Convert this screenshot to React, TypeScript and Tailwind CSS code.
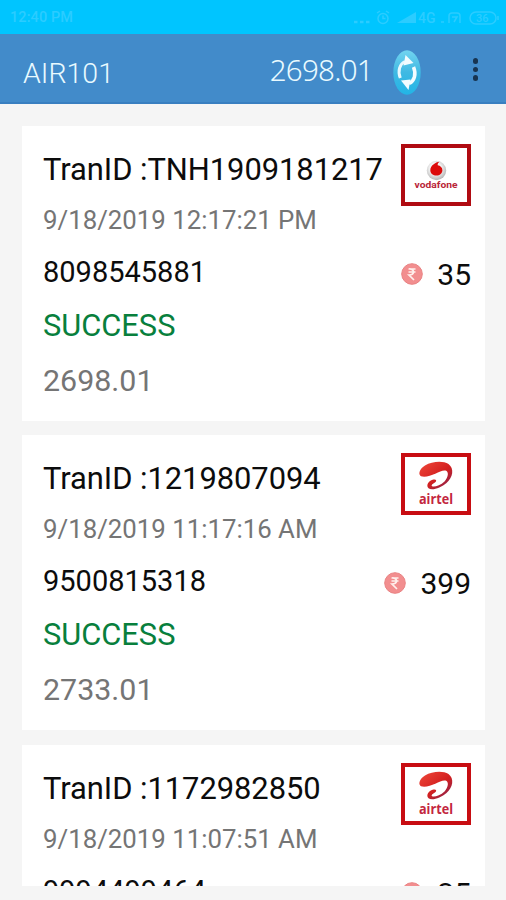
import { useId } from "react";

type Operator = "vodafone" | "airtel";

interface Transaction {
  id: string;
  date: string;
  phone: string;
  status: string;
  balance: string;
  amount: string;
  operator: Operator;
}

const transactions: Transaction[] = [
  { id: "TNH1909181217", date: "9/18/2019 12:17:21 PM", phone: "8098545881", status: "SUCCESS", balance: "2698.01", amount: "35", operator: "vodafone" },
  { id: "1219807094", date: "9/18/2019 11:17:16 AM", phone: "9500815318", status: "SUCCESS", balance: "2733.01", amount: "399", operator: "airtel" },
  { id: "1172982850", date: "9/18/2019 11:07:51 AM", phone: "9994499464", status: "SUCCESS", balance: "3132.01", amount: "35", operator: "airtel" },
];

function StatusBar() {
  return (
    <div className="flex h-[34px] shrink-0 items-center justify-between bg-[#00c5ff] pt-0.5 pr-1.5 pl-2.5 text-[#2bccff]">
      <span className="text-[14.5px] font-medium tracking-[0.1px]">12:40 PM</span>
      <svg width="146" height="18" viewBox="0 0 146 18" fill="none" stroke="currentColor" strokeWidth="1.5">
        <path d="M0 13h3.500M6 13h3.500M12 13h3.500" strokeWidth="2.500" />
        <circle cx="29" cy="9.500" r="5" />
        <path d="M29 6.500v3h2.500M23 4l3-2M35 4l-3-2" />
        <path d="M43 14 62 3v11z" fill="currentColor" stroke="none" />
        <text x="64" y="14" fontSize="14" fontWeight="500" fill="currentColor" stroke="none">4G</text>
        <path d="M87 13h3M95 14V7a3 3 0 0 1 3-3h5a3 3 0 0 1 3 3v7M98 8h5l-3 5" />
        <rect x="116" y="3" width="26" height="12" rx="6" />
        <text x="122" y="13" fontSize="11" fontWeight="500" fill="currentColor" stroke="none">36</text>
        <path d="M144 7v4" />
      </svg>
    </div>
  );
}

function RefreshIcon() {
  const id = useId();
  return (
    <svg width="28" height="45" viewBox="0 0 28 45">
      <defs>
        <linearGradient id={id} x1="0" y1="0" x2="0" y2="1">
          <stop offset="0" stopColor="#72d4f0" />
          <stop offset="0.5" stopColor="#3fb9e3" />
          <stop offset="1" stopColor="#22b5e6" />
        </linearGradient>
      </defs>
      <ellipse cx="14" cy="22.500" rx="13.700" ry="22.200" fill={`url(#${id})`} />
      <path d="M7.300 28C4.500 21 6.500 14 12 11.500" fill="none" stroke="#e8f9ff" strokeWidth="3" />
      <path d="M12.500 5 20.500 13 10.500 15.500z" fill="#f3fcff" />
      <path d="M20.500 17C23.500 24 21.500 31 16 33.500" fill="none" stroke="#f3fcff" strokeWidth="3.500" />
      <path d="M15.500 40 8 30.500 17.500 29.500z" fill="#f3fcff" />
    </svg>
  );
}

function AppBar() {
  return (
    <header className="flex h-[70px] shrink-0 items-center border-b-2 border-[#397fc0] bg-[#428bca] pl-[23px] text-[#e9faff]">
      <h1 className="flex-1 pt-3 text-[28.5px] font-light">AIR101</h1>
      <span className="mr-5 pt-[3px] font-['Noto_Sans',sans-serif] text-[29.5px] leading-none font-light tracking-[-0.7px]">2698.01</span>
      <button className="mt-2" aria-label="Refresh balance">
        <RefreshIcon />
      </button>
      <button className="mt-[3px] mr-7 ml-[51.5px] flex flex-col gap-[3px]" aria-label="More options">
        <span className="size-[5.5px] rounded-full bg-[#183450]" />
        <span className="size-[5.5px] rounded-full bg-[#183450]" />
        <span className="size-[5.5px] rounded-full bg-[#183450]" />
      </button>
    </header>
  );
}

function VodafoneLogo() {
  const id = useId();
  return (
    <svg width="62" height="54" viewBox="0 0 62 54">
      <defs>
        <radialGradient id={id} cx="0.45" cy="0.4" r="0.6">
          <stop offset="0.5" stopColor="#f2f2f2" />
          <stop offset="1" stopColor="#b5b5b5" />
        </radialGradient>
      </defs>
      <circle cx="31.500" cy="22.500" r="9.700" fill={`url(#${id})`} />
      <path d="M34.500 13.800C30.500 14.300 25.300 17.500 25.300 22.300C25.300 25.900 28.300 27.600 31.300 27.600C34.800 27.600 37.400 25.300 37.400 22.300C37.400 19.500 35.400 17.800 32.700 17.300C32.600 15.800 33.200 14.600 34.500 13.800Z" fill="#dc0a0a" />
      <text x="31" y="40" textAnchor="middle" textLength="43" lengthAdjust="spacingAndGlyphs" fontSize="9" fontWeight="700" fill="#b92638">vodafone</text>
    </svg>
  );
}

function AirtelLogo() {
  const id = useId();
  return (
    <svg width="62" height="54" viewBox="0 0 62 54">
      <defs>
        <linearGradient id={id} x1="0" y1="0" x2="1" y2="1">
          <stop offset="0" stopColor="#f0483a" />
          <stop offset="0.55" stopColor="#d3201f" />
          <stop offset="1" stopColor="#7c2358" />
        </linearGradient>
      </defs>
      <path
        d="M17 19.500C12.500 18.500 14 12 20 8.500C27 4.400 38 3.600 43.500 7C49.500 11.500 48 20.500 41.500 26C36 30.800 27 34 23.500 31.300C20.500 28 24 23.500 28.500 22.500C31 22 32 23.500 30.500 25C29.500 26.200 27.200 26.800 26.600 28.300C26.500 31 34.500 29.300 39.500 24.500C43.500 20 44 14.500 40.500 13.500C35.500 12.300 26 20.800 17 19.500Z"
        fill={`url(#${id})`}
      />
      <text x="31" y="46.500" textAnchor="middle" textLength="34" lengthAdjust="spacingAndGlyphs" fontSize="14" fontWeight="700" fill="#c32640" className="font-['Open_Sans',sans-serif]">airtel</text>
    </svg>
  );
}

function RupeeIcon() {
  return (
    <svg width="22" height="22" viewBox="0 0 22 22">
      <circle cx="11" cy="11" r="10.300" fill="#f28e8f" stroke="#e98384" />
      <path d="M7.500 6h7M7.500 9h7M8 6c6-.5 6 6 0 6l5 5" fill="none" stroke="#fff0ed" strokeWidth="1.700" />
    </svg>
  );
}

function TransactionCard({ tx }: { tx: Transaction }) {
  const isVodafone = tx.operator === "vodafone";

  return (
    <article className="flex h-[295px] shrink-0 justify-between bg-white pr-3.5 pl-[21px] whitespace-nowrap">
      <div className="pt-[22px]">
        <h2 className="text-[30.9px] leading-[44px] tracking-[-0.05px] text-[#0c0c0c]">TranID :{tx.id}</h2>
        <p className="text-[25.8px] leading-[57px] text-[#757575]">{tx.date}</p>
        <p className="text-[29px] leading-[46px] text-[#0c0c0c]">{tx.phone}</p>
        <p className="text-[30.8px] leading-[62px] text-[#087f3d]">{tx.status}</p>
        <p className="text-[30.4px] leading-[48px] text-[#757575]">{tx.balance}</p>
      </div>
      <div className="flex w-0 flex-col items-end pt-[18px]">
        <div className={`h-[62px] w-[70px] shrink-0 border-4 bg-white ${isVodafone ? "border-[#b00b12]" : "border-[#c80d12]"}`}>
          {isVodafone ? <VodafoneLogo /> : <AirtelLogo />}
        </div>
        <div className="mt-[46px] flex items-center gap-3.5">
          <RupeeIcon />
          <span className="pt-0.5 text-[30px] leading-[42px] text-[#0c0c0c]">{tx.amount}</span>
        </div>
      </div>
    </article>
  );
}

export default function App() {
  return (
    <div className="flex h-[900px] w-[506px] flex-col overflow-hidden bg-[#f5f5f5] font-[Roboto,sans-serif]">
      <StatusBar />
      <AppBar />
      <main className="mt-[21.5px] mr-[21px] mb-3.5 ml-[22px] flex min-h-0 flex-1 flex-col gap-[14.5px] overflow-hidden">
        {transactions.map((tx) => (
          <TransactionCard key={tx.id} tx={tx} />
        ))}
      </main>
    </div>
  );
}
